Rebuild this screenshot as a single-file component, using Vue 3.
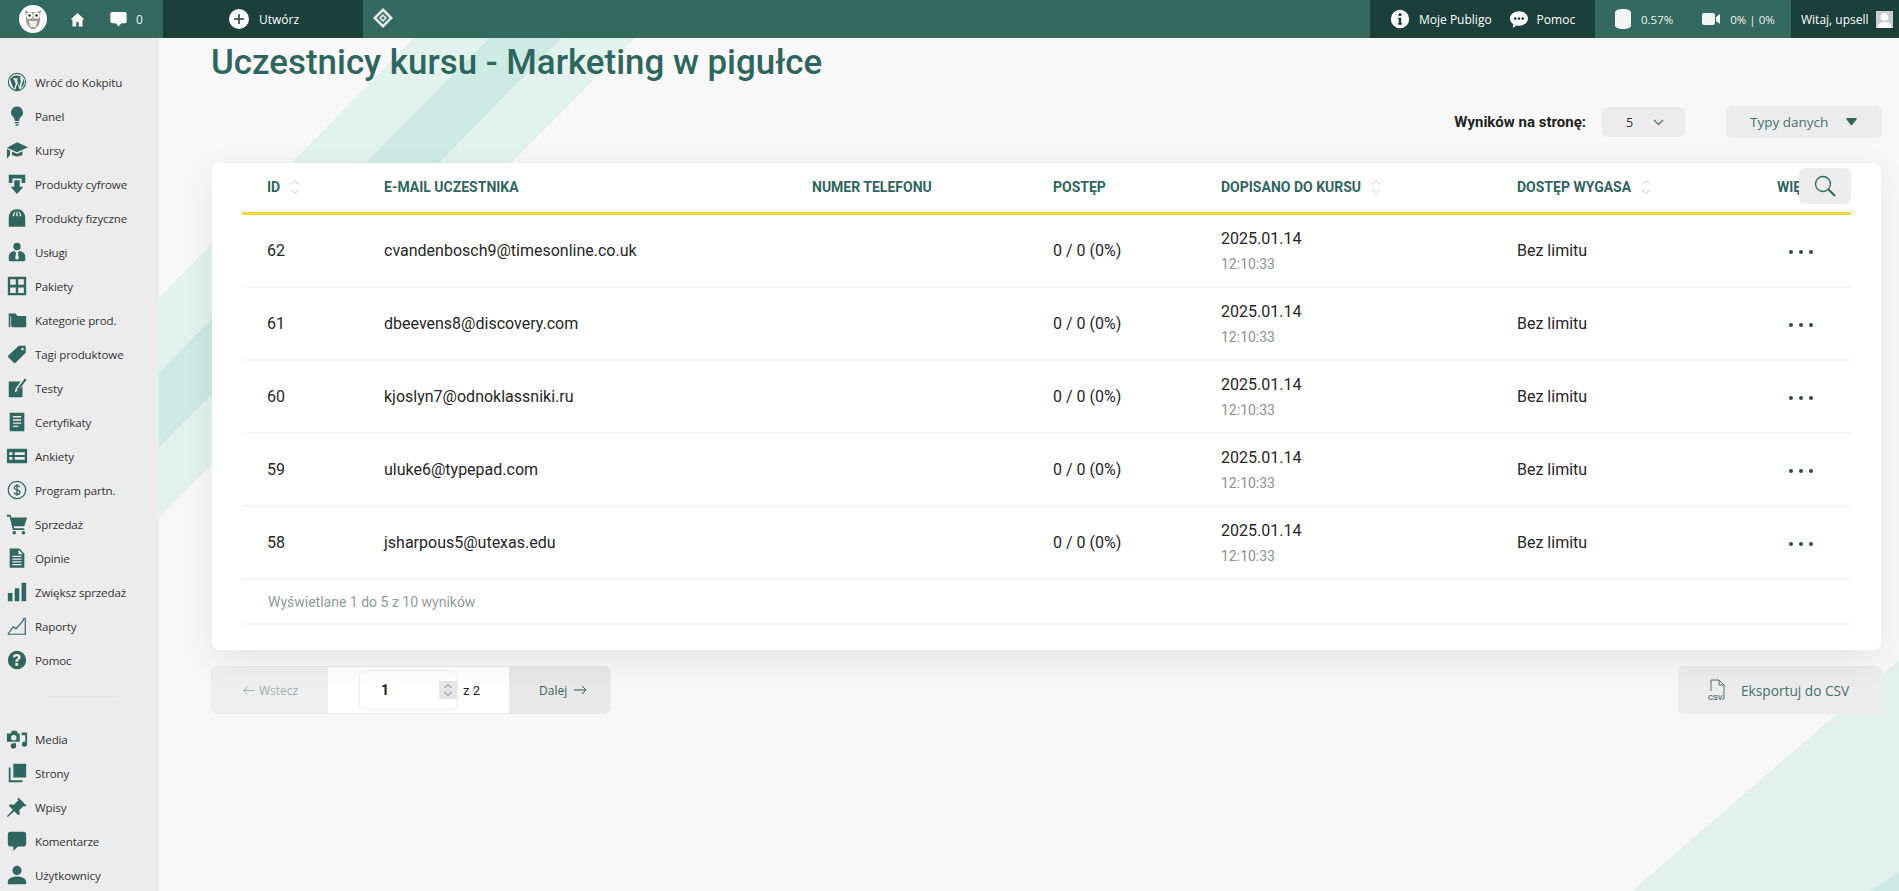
<script setup>
const icons = {
  wp: { f: 'M12 2a10 10 0 1 0 0 20 10 10 0 0 0 0-20zm0 1.200a8.800 8.800 0 1 1 0 17.600 8.800 8.800 0 0 1 0-17.600zM4.400 9.200 8.600 20l2-5.800-1.700-5H7.800V8h5.200v1.200h-1.300l2.700 7.900 1.500-4.700c.5-1.500.1-3-.4-3.900-.5-.8-.3-2 .8-2.100a8.200 8.200 0 0 0-11.900 2.800zm8 4.500-2.300 6.600a8 8 0 0 0 4.700-.1zm6.600-5.800c.1 1.500-.3 2.600-.7 3.800l-2.400 7.100a8.100 8.100 0 0 0 3.100-10.900z' },
  bulb: { f: 'M12 1.500a6.500 6.500 0 0 0-4 11.600c1 .9 1.500 2.400 1.700 4.400h4.600c.2-2 .7-3.500 1.700-4.400a6.500 6.500 0 0 0-4-11.600zM9.500 18.500h5V20h-5zM10 21h4l-.8 1.500h-2.400z' },
  cap: { f: 'M12 3.500 24 9l-12 5.500L1 9.500zM6.500 13.500l5.500 2.500 6-2.700v4c-3 2.500-8.500 2.500-11.500 0zM1 11l3.500 1.500v5L1 21.500z' },
  down: { f: 'M3 2h18v9h-4V6H7v5H3zM9 8h6v7h4l-7 8-7-8h4z' },
  bag: { f: 'M3 10.500C4 5.500 7 2.500 12 2.500s8 3 9 8v11H3zM7.200 10h1.800c0-3 1-5.200 1.500-5.500C8.800 5 7.400 7 7.200 10zm4 0h1.600c0-3-.2-5-.8-5.600-.5.600-.8 2.600-.8 5.600zm3.800 0h1.800c-.2-3-1.600-5-3.300-5.500.6.500 1.500 2.500 1.500 5.500z' },
  svc: { f: 'M12 2a4 4 0 1 1 0 8 4 4 0 0 1 0-8zM3 21v-4c0-3.500 3-5.500 6.500-6l1.500 2-1 6 2 1.500 2-1.500-1-6 1.500-2c3.500.5 6.500 2.500 6.500 6v4a2 2 0 0 1-2 1H5a2 2 0 0 1-2-1z' },
  grid: { f: 'M2 2h20v20H2zm2.500 2.500v6.200h6.200V4.500zm8.800 0v6.200h6.200V4.500zm-8.800 9v6h6.200v-6zm8.800 0v6h6.200v-6z' },
  folder: { f: 'M3 5h7.500L12.500 7.500H22V20H6.500V9.500h-.1V19H5.500V7.500H4.800V20H3z' },
  tag: { f: 'M14 3h7.500v7.500L10.500 21.500a1.500 1.500 0 0 1-2 0L2.500 15.500a1.500 1.500 0 0 1 0-2zm4 2.200a1.300 1.300 0 1 0 0 2.600 1.300 1.300 0 0 0 0-2.600z' },
  test: { f: 'M3 5h13l-5.500 7.500-1 4.500 4-2.500L18 10v12H3zM20.500 1.500l2 1.500L14 14l-2 1 .3-2.200z' },
  cert: { f: 'M4 2h16v20H4zm3.500 3.500V7h9V5.500zm0 3.500v1.500h9V9zm0 3.500V14h9v-1.500zm0 3.500v1.500h6V16z' },
  form: { f: 'M1 4h22v16H1zm2.500 4v3h3.500V8zm6 0v3h11V8zm-6 5v3h3.500v-3zm6 0v3h11v-3z' },
  dollar: { s: 'M12 2.500a9.500 9.500 0 1 0 0 19 9.500 9.500 0 0 0 0-19zM15 9c-.4-1.200-1.500-1.800-3-1.800-1.700 0-3 .9-3 2.300 0 3.200 6.200 1.600 6.200 4.900 0 1.400-1.300 2.400-3.200 2.400-1.600 0-2.800-.8-3.200-2M12 5.500v13', w: 1.400 },
  cart: { f: 'M1 2h4l.8 3H23l-3 9.500H8.500l.5 2h11v2H7.500L4 4H1zM9 19.500a2 2 0 1 1 0 4 2 2 0 0 1 0-4zm10 0a2 2 0 1 1 0 4 2 2 0 0 1 0-4z' },
  doc: { f: 'M4 1.500h10.500L20 7v15.500H4zM13.500 3v5h5l-5-5zM7 9.500V11h10V9.500zm0 3V14h10v-1.500zm0 3V17h10v-1.500zm0 3V20h10v-1.500z' },
  bars: { f: 'M2 13h5v9H2zM9.500 8h5v14h-5zM17 2h5v20h-5z' },
  chart: { s: 'M2 21h20M2 21 8 13l3 2 7-8M21 3v18M20 3l-2 4', w: 1.300 },
  help: { f: 'M12 2a10 10 0 1 1 0 20 10 10 0 0 1 0-20zm-.2 3.500c-2.600 0-4.200 1.300-4.400 3.500h2.800c.1-.8.700-1.200 1.500-1.200s1.400.5 1.400 1.200c0 1.600-3 1.700-3 5h2.800c0-2.200 3.100-2.300 3.100-5.200 0-2.200-1.800-3.300-4.200-3.300zm-1.600 9.700v3h3v-3z' },
  media: { f: 'M5 6l1.500-3h5L13 6h2v9H1V6zm3.500 1.700a3 3 0 1 0 0 6 3 3 0 0 0 0-6zM17 5h6v12.500a2.800 2.800 0 1 1-2-2.600V8h-4zM8 16.500h3v2.500a3 3 0 1 1-3-2.500z' },
  pages: { f: 'M8 2h14v15H8zM5 6v14h13v2H3V6z' },
  pin: { f: 'M13.500 1.500l9 9-2 1-1-1-5 5 .5 4-1.500 1.500-4.500-4.500L2 23l-1-1 6.500-7-4.500-4.500L4.500 9l4 .5 5-5-1-1z' },
  comment: { f: 'M5 2h14a3 3 0 0 1 3 3v10a3 3 0 0 1-3 3h-6l-5 5v-5H5a3 3 0 0 1-3-3V5a3 3 0 0 1 3-3z' },
  user: { f: 'M12 2a5 5 0 1 1 0 10 5 5 0 0 1 0-10zM2 22v-2.500C2 16 6 13.500 12 13.500S22 16 22 19.500V22z' }
}

const menuTop = [
  ['wp', 'Wróć do Kokpitu'], ['bulb', 'Panel'], ['cap', 'Kursy'], ['down', 'Produkty cyfrowe'],
  ['bag', 'Produkty fizyczne'], ['svc', 'Usługi'], ['grid', 'Pakiety'], ['folder', 'Kategorie prod.'],
  ['tag', 'Tagi produktowe'], ['test', 'Testy'], ['cert', 'Certyfikaty'], ['form', 'Ankiety'],
  ['dollar', 'Program partn.'], ['cart', 'Sprzedaż'], ['doc', 'Opinie'], ['bars', 'Zwiększ sprzedaż'],
  ['chart', 'Raporty'], ['help', 'Pomoc']
]
const menuBottom = [
  ['media', 'Media'], ['pages', 'Strony'], ['pin', 'Wpisy'], ['comment', 'Komentarze'], ['user', 'Użytkownicy']
]

const columns = [
  { label: 'ID', sort: true }, { label: 'E-mail uczestnika' }, { label: 'Numer telefonu' },
  { label: 'Postęp' }, { label: 'Dopisano do kursu', sort: true }, { label: 'Dostęp wygasa', sort: true },
  { label: 'Więcej' }
]
const rows = [
  [62, 'cvandenbosch9@timesonline.co.uk'], [61, 'dbeevens8@discovery.com'],
  [60, 'kjoslyn7@odnoklassniki.ru'], [59, 'uluke6@typepad.com'], [58, 'jsharpous5@utexas.edu']
]
</script>

<template>
  <div class="page">
    <svg class="bg" width="1899" height="891" viewBox="0 0 1899 891" aria-hidden="true">
      <polygon points="414,38 489,38 159,372 159,298" fill="#e2f2ed" />
      <polygon points="489,38 562,38 159,448 159,372" fill="#cdebe3" />
      <polygon points="562,38 635,38 159,518 159,448" fill="#e2f2ed" />
      <polygon points="1632,891 1899,660 1899,891" fill="#e2f1ec" />
      <polygon points="1870,891 1899,872 1899,891" fill="#cdebe3" />
    </svg>

    <header class="topbar">
      <div class="logo">
        <svg width="22" height="24" viewBox="0 0 22 24">
          <path d="M3 3l4 2h8l4-2-1 6c1 6-2 13-7 13S3 15 4 9z" fill="#9a9d96" />
          <circle cx="7.500" cy="8.500" r="3.200" fill="#fff" />
          <circle cx="14.500" cy="8.500" r="3.200" fill="#fff" />
          <circle cx="7.500" cy="8.500" r="1.300" fill="#333" />
          <circle cx="14.500" cy="8.500" r="1.300" fill="#333" />
          <path d="M7 14h8l-1 6H8z" fill="#f3efd8" />
          <path d="M10 11h2l-1 2z" fill="#d6a63a" />
        </svg>
      </div>
      <svg class="tb-home" width="15" height="15" viewBox="0 0 24 24"><path d="M12 1.500 1 12h3v11h6v-7h4v7h6V12h3z" fill="#fff" /></svg>
      <svg class="tb-comment" width="17" height="16" viewBox="0 0 24 22"><path d="M3 1h18a2.500 2.500 0 0 1 2.500 2.500v11A2.500 2.500 0 0 1 21 17h-5l-4 4.500L8 17H3a2.500 2.500 0 0 1-2.500-2.500v-11A2.500 2.500 0 0 1 3 1z" fill="#fff" /></svg>
      <span class="tb-count">0</span>
      <div class="tb-create">
        <span class="plus"><svg width="10" height="10" viewBox="0 0 10 10"><path d="M5 0v10M0 5h10" stroke="#1a4039" stroke-width="1.500" /></svg></span>
        <span>Utwórz</span>
      </div>
      <svg class="tb-diamond" width="20" height="20" viewBox="0 0 20 20">
        <path d="M10 0l10 10-10 10L0 10z" fill="#e8efec" />
        <path d="M10 3.500 16.500 10 10 16.500 3.500 10z" fill="#3b756b" />
        <path d="M10 6l4 4-4 4-4-4z" fill="#dfe9e6" />
        <path d="M10 8.200 11.800 10 10 11.800 8.200 10z" fill="#3b756b" />
      </svg>
      <div class="tb-spacer"></div>
      <div class="tb-dark tb-links">
        <svg width="20" height="20" viewBox="0 0 24 24"><path fill-rule="evenodd" d="M12 1a11 11 0 1 1 0 22 11 11 0 0 1 0-22zm-1.700 4v3.500h3.400V5zm-.8 5.500V12h1v5h-1v2h5v-2h-1v-6.500z" fill="#fff" /></svg>
        <span class="tb-moje">Moje Publigo</span>
        <svg width="18" height="17" viewBox="0 0 24 22"><path fill-rule="evenodd" d="M12 0c6.600 0 12 4.300 12 9.700s-5.400 9.700-12 9.700c-1 0-2-.1-3-.3L3.500 22l1-4.700C1.800 15.500 0 12.800 0 9.700 0 4.300 5.400 0 12 0zM7 8a1.800 1.800 0 1 0 0 3.600A1.800 1.800 0 0 0 7 8zm5 0a1.800 1.800 0 1 0 0 3.600A1.800 1.800 0 0 0 12 8zm5 0a1.800 1.800 0 1 0 0 3.600A1.800 1.800 0 0 0 17 8z" fill="#fff" /></svg>
        <span>Pomoc</span>
      </div>
      <div class="tb-usage">
        <svg width="16" height="20" viewBox="0 0 16 20"><path d="M0 3.500C0 1.500 3.500 0 8 0s8 1.500 8 3.500v13c0 2-3.500 3.500-8 3.500s-8-1.500-8-3.500z" fill="#f2f5f4" /></svg>
        <span class="tb-pct">0.57%</span>
        <svg class="tb-cam" width="18" height="12" viewBox="0 0 18 12"><path d="M2 0h9a2 2 0 0 1 2 2v8a2 2 0 0 1-2 2H2a2 2 0 0 1-2-2V2a2 2 0 0 1 2-2zm12 4 4-3v10l-4-3z" fill="#f2f5f4" /></svg>
        <span class="tb-pct">0% | 0%</span>
      </div>
      <div class="tb-dark tb-user">
        <span>Witaj, upsell</span>
        <span class="avatar"><svg width="17" height="17" viewBox="0 0 17 17"><rect width="17" height="17" fill="#c9cdcb" /><circle cx="8.500" cy="6" r="3.800" fill="#fff" /><path d="M1.500 17c0-4 3-6 7-6s7 2 7 6z" fill="#fff" /></svg></span>
      </div>
    </header>

    <div class="body">
      <aside class="sidebar">
        <a v-for="[ic, text] in menuTop" :key="text" class="mitem">
          <svg width="22" height="22" viewBox="0 0 24 24" class="micon">
            <path v-if="icons[ic].f" :d="icons[ic].f" fill-rule="evenodd" fill="#2f675e" />
            <path v-else :d="icons[ic].s" fill="none" stroke="#2f675e" :stroke-width="icons[ic].w" />
          </svg>
          <span>{{ text }}</span>
        </a>
        <div class="mdiv"></div>
        <a v-for="[ic, text] in menuBottom" :key="text" class="mitem">
          <svg width="22" height="22" viewBox="0 0 24 24" class="micon">
            <path :d="icons[ic].f" fill-rule="evenodd" fill="#2f675e" />
          </svg>
          <span>{{ text }}</span>
        </a>
      </aside>

      <main class="main">
        <h1 class="title">Uczestnicy kursu - Marketing w pigułce</h1>

        <div class="toolbar">
          <span class="per-label">Wyników na stronę:</span>
          <div class="select">
            <span>5</span>
            <svg width="11" height="7" viewBox="0 0 11 7"><path d="M1 1l4.500 4.500L10 1" fill="none" stroke="#4a6f68" stroke-width="1.200" /></svg>
          </div>
          <div class="types">
            <span>Typy danych</span>
            <svg width="11" height="8" viewBox="0 0 12 9"><path d="M1 0h10c1 0 1.300.8.800 1.500L6.800 8c-.4.500-1.200.500-1.600 0L.2 1.500C-.3.800 0 0 1 0z" fill="#2f675e" /></svg>
          </div>
        </div>

        <section class="card">
          <button class="search" aria-label="Szukaj">
            <svg width="22" height="22" viewBox="0 0 22 22"><circle cx="9" cy="9" r="7.500" fill="none" stroke="#2f675e" stroke-width="1.300" /><path d="M14.500 14.500 21 21" stroke="#2f675e" stroke-width="2" /></svg>
          </button>
          <div class="grid head">
            <div v-for="c in columns" :key="c.label" class="th">
              {{ c.label }}
              <svg v-if="c.sort" class="sort" width="12" height="18" viewBox="0 0 12 18"><path d="M2 6.500 6 2.500l4 4M2 11.500l4 4 4-4" fill="none" stroke="#c6cbc9" stroke-width="1" /></svg>
            </div>
          </div>
          <div v-for="[id, mail] in rows" :key="id" class="grid row">
            <div>{{ id }}</div>
            <div>{{ mail }}</div>
            <div></div>
            <div>0 / 0 (0%)</div>
            <div class="date"><span>2025.01.14</span><small>12:10:33</small></div>
            <div>Bez limitu</div>
            <div class="dots"><i></i><i></i><i></i></div>
          </div>
          <div class="summary">Wyświetlane 1 do 5 z 10 wyników</div>
        </section>

        <div class="bottom">
          <nav class="pager">
            <span class="prev">
              <svg width="12" height="9" viewBox="0 0 12 9"><path d="M4.500 .5l-4 4 4 4M.5 4.500H12" fill="none" stroke="#a6b3b0" stroke-width="1" /></svg>
              Wstecz
            </span>
            <span class="pmid">
              <span class="pinput">1<span class="spin"><svg width="10" height="14" viewBox="0 0 10 14"><path d="M1.500 5 5 1.500 8.500 5M1.500 9 5 12.500 8.500 9" fill="none" stroke="#6f7d7a" stroke-width="1" /></svg></span></span>
              <span class="pof">z 2</span>
            </span>
            <span class="next">
              Dalej
              <svg width="13" height="10" viewBox="0 0 13 10"><path d="M8 1l4 4-4 4M12 5H0" fill="none" stroke="#2f5b54" stroke-width="1" /></svg>
            </span>
          </nav>
          <div class="export">
            <svg width="20" height="22" viewBox="0 0 20 22">
              <path d="M3 12V1h8l5 5v14h-2M11 1v5h5" fill="none" stroke="#54736d" stroke-width="1" />
              <text x="0" y="21" font-size="7" font-weight="700" font-family="Liberation Sans, sans-serif" fill="#54736d">CSV</text>
            </svg>
            <span>Eksportuj do CSV</span>
          </div>
        </div>
      </main>
    </div>
  </div>
</template>

<style>
html, body { margin: 0; background: #f8f8f8; overflow: hidden; }
</style>

<style scoped>
.page { position: relative; width: 1899px; height: 891px; overflow: hidden; background: #f8f8f8; font-family: "Open Sans", "Noto Sans", sans-serif; }
.bg { position: absolute; left: 0; top: 0; }
.topbar { position: relative; height: 38px; background: #33695f; color: #fff; display: flex; align-items: center; font-size: 12px; }
.logo { width: 28px; height: 28px; margin-left: 19px; border-radius: 50%; background: #fff; display: flex; align-items: center; justify-content: center; }
.tb-home { margin-left: 23px; }
.tb-comment { margin-left: 25px; }
.tb-count { margin-left: 9px; width: 10px; opacity: .9; }
.tb-create { margin-left: 17px; width: 200px; height: 38px; box-sizing: border-box; padding-left: 66px; background: #1a4039; display: flex; align-items: center; gap: 10px; }
.plus { width: 20px; height: 20px; border-radius: 50%; background: #fff; display: flex; align-items: center; justify-content: center; }
.tb-diamond { margin-left: 10px; margin-top: -2px; }
.tb-spacer { flex: 1; }
.tb-dark { height: 38px; background: #1a4039; display: flex; align-items: center; box-sizing: border-box; }
.tb-links { width: 225px; padding-left: 20px; gap: 9px; }
.tb-moje { margin-right: 9px; }
.tb-usage { width: 196px; height: 38px; box-sizing: border-box; padding-left: 20px; display: flex; align-items: center; gap: 10px; background: #34695f; font-size: 11.500px; }
.tb-pct { opacity: .92; }
.tb-cam { margin-left: 19px; }
.tb-user { width: 108px; padding-left: 10px; gap: 7px; }
.avatar { display: flex; }
.body { position: relative; display: flex; height: 853px; }
.sidebar { width: 159px; flex: none; background: #ececec; box-sizing: border-box; padding-top: 27px; overflow: hidden; }
.mitem { height: 34px; display: flex; align-items: center; color: #333; font-size: 11.600px; letter-spacing: -.15px; padding-left: 6px; }
.micon { margin-right: 7px; flex: none; }
.mdiv { width: 70px; height: 1px; background: #e4e4e4; margin: 19px 0 25px 46px; }
.main { flex: 1; min-width: 0; padding: 0 18px 0 53px; box-sizing: border-box; font-family: Roboto, sans-serif; }
.title { margin: 0 0 0 -1px; height: 52px; line-height: 50px; font-size: 34.900px; font-weight: 500; color: #2e665d; white-space: nowrap; }
.toolbar { margin-top: 16px; height: 32px; display: flex; align-items: center; justify-content: flex-end; margin-right: -1px; font-size: 14px; }
.per-label { font-weight: 700; color: #222; font-size: 15px; margin-right: 16px; }
.select { width: 83px; height: 30px; border-radius: 6px; background: #ececec; box-sizing: border-box; padding-left: 24px; display: flex; align-items: center; gap: 20px; color: #333; font-family: "Open Sans", sans-serif; font-size: 12.500px; }
.types { width: 156px; height: 32px; margin-left: 41px; border-radius: 6px; background: #ececec; box-sizing: border-box; padding-left: 24px; display: flex; align-items: center; gap: 18px; color: #44716a; font-family: "Open Sans", sans-serif; font-size: 13.500px; }
.card { position: relative; margin-top: 25px; height: 487px; background: #fff; border-radius: 8px; box-shadow: 0 10px 34px rgba(0, 0, 0, .08); padding: 0 30px; box-sizing: border-box; }
.search { position: absolute; right: 30px; top: 5px; width: 52px; height: 36px; border: 0; padding: 0; border-radius: 6px; background: #ececec; display: flex; align-items: center; justify-content: center; }
.grid { display: grid; grid-template-columns: 117px 428px 241px 168px 296px 260px 99px; }
.grid > div { padding-left: 25px; display: flex; align-items: center; min-width: 0; white-space: nowrap; }
.head { height: 49px; border-bottom: 3px solid #efd841; }
.grid > .th { font-size: 14px; font-weight: 700; text-transform: uppercase; color: #2f665d; gap: 9px; overflow: hidden; padding-bottom: 2px; }
.row { height: 71px; border-bottom: 2px solid #f6f6f6; font-size: 16px; color: #262626; }
.grid > .date { flex-direction: column; align-items: flex-start; justify-content: center; gap: 8px; }
.date small { font-size: 14px; color: #8c8f8f; }
.dots { gap: 6px; }
.grid > .dots { padding-left: 37px; padding-top: 2px; }
.dots i { width: 4px; height: 4px; border-radius: 50%; background: #37474a; }
.summary { height: 43px; line-height: 44px; padding-left: 26px; border-bottom: 2px solid #f6f6f6; font-size: 14px; color: #8d9997; }
.bottom { margin-top: 16px; margin-left: -1px; display: flex; justify-content: space-between; margin-right: -1px; }
.pager { width: 400px; height: 48px; display: flex; border-radius: 6px; overflow: hidden; box-sizing: border-box; border: 1px solid #ebebeb; font-family: "Open Sans", sans-serif; font-size: 12px; }
.prev { width: 116px; background: #efefef; color: #a3b0ad; display: flex; align-items: center; gap: 4px; padding-left: 31px; box-sizing: border-box; }
.pmid { width: 181px; background: #fff; display: flex; align-items: center; padding-left: 31px; box-sizing: border-box; gap: 5px; }
.pinput { width: 99px; height: 40px; box-sizing: border-box; border: 1px solid #ececec; border-radius: 6px; position: relative; padding-left: 21px; display: flex; align-items: center; font: 700 14px Roboto, sans-serif; color: #222; }
.spin { position: absolute; right: 0; top: 10px; width: 18px; height: 18px; background: #e6e6e6; display: flex; align-items: center; justify-content: center; }
.pof { color: #222; font: 400 13px Roboto, sans-serif; }
.next { flex: 1; background: #e8e8e8; color: #3c5f58; display: flex; align-items: center; gap: 7px; padding-left: 30px; }
.export { width: 204px; height: 48px; box-sizing: border-box; padding-left: 30px; border-radius: 6px; background: #ececec; display: flex; align-items: center; gap: 13px; color: #44716a; font-family: "Open Sans", sans-serif; font-size: 13.700px; }
</style>
